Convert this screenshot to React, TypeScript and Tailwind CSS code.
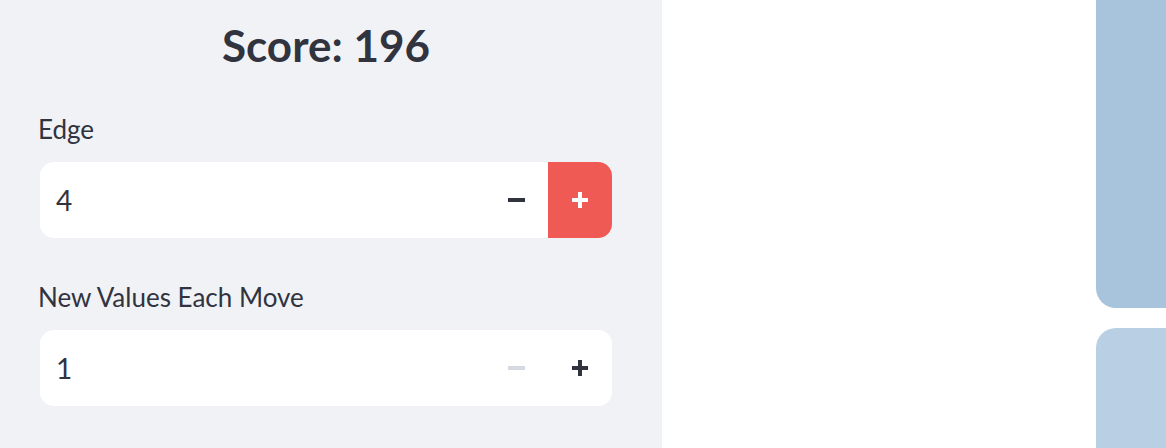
import React from "react";

function NumberField({ value, minusDisabled, plusActive }: { value: string; minusDisabled?: boolean; plusActive?: boolean }) {
  return (
    <div className="flex h-[76px] w-[572px] items-stretch overflow-hidden rounded-[14px] bg-white">
      <div className="flex flex-1 items-center pl-[16px] text-[28px] text-[#31333f]">{value}</div>
      <div className="flex w-[63px] items-center justify-center">
        <div className={`h-[4px] w-[17px] ${minusDisabled ? "bg-[#d6d9e1]" : "bg-[#31333f]"}`} />
      </div>
      <div className={`relative flex w-[64px] items-center justify-center ${plusActive ? "bg-[#ef5a55]" : ""}`}>
        <div className="relative h-[16px] w-[16px]">
          <div className={`absolute left-0 top-[6px] h-[4px] w-[16px] ${plusActive ? "bg-white" : "bg-[#31333f]"}`} />
          <div className={`absolute left-[6px] top-0 h-[16px] w-[4px] ${plusActive ? "bg-white" : "bg-[#31333f]"}`} />
        </div>
      </div>
    </div>
  );
}

export default function App() {
  return (
    <div className="flex h-[448px] w-[1166px] overflow-hidden bg-white font-['Lato','Liberation_Sans',sans-serif] text-[#31333f]">
      <div className="flex w-[662px] shrink-0 flex-col bg-[#f0f2f6] pl-[40px]">
        <h1 className="mt-[18px] w-[572px] text-center text-[44px] font-bold leading-[54px]">Score: 196</h1>
        <div className="ml-[-2px] mt-[42px] text-[26px] leading-[30px]">Edge</div>
        <div className="mt-[18px]">
          <NumberField value="4" plusActive />
        </div>
        <div className="ml-[-2px] mt-[44px] text-[26px] leading-[30px]">New Values Each Move</div>
        <div className="mt-[18px]">
          <NumberField value="1" minusDisabled />
        </div>
      </div>
      <div className="flex flex-1 justify-end">
        <div className="flex w-[70px] flex-col gap-[20px]">
          <div className="h-[308px] shrink-0 rounded-bl-[20px] bg-[#a8c4dd]" />
          <div className="h-[140px] shrink-0 rounded-tl-[20px] bg-[#b9cfe3]" />
        </div>
      </div>
    </div>
  );
}
